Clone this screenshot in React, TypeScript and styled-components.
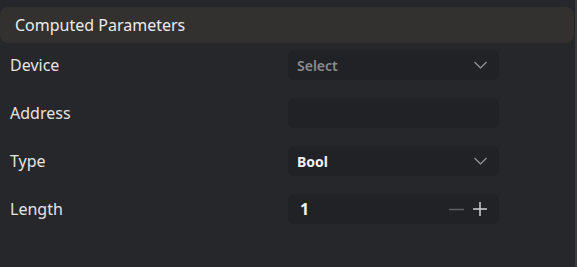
import styled, { createGlobalStyle } from "styled-components";

const GlobalStyle = createGlobalStyle`
  html, body {
    margin: 0;
    padding: 0;
    background: #26272b;
  }
  body {
    font-family: "Noto Sans", "Open Sans", sans-serif;
    color: #e6e6e6;
  }
`;

const Panel = styled.div`
  width: 577px;
  height: 267px;
  box-sizing: border-box;
  padding-top: 7px;
  border-right: 2px solid #3a3b3f;
  display: flex;
  flex-direction: column;
`;

const Header = styled.div`
  height: 36px;
  margin-right: 1px;
  display: flex;
  align-items: center;
  padding-left: 15px;
  background: #32312f;
  border-radius: 8px;
  font-size: 16px;
  color: #ececec;
`;

const Rows = styled.div`
  display: flex;
  flex-direction: column;
  gap: 18px;
  padding-top: 7px;
`;

const Row = styled.div`
  display: grid;
  grid-template-columns: 288px 211px;
  align-items: center;
  height: 30px;
`;

const Label = styled.div`
  padding-left: 10px;
  font-size: 16px;
  color: #e4e4e4;
`;

const Field = styled.div`
  height: 30px;
  box-sizing: border-box;
  background: #212226;
  border-radius: 6px;
  display: flex;
  align-items: center;
  padding: 0 12px 0 9px;
`;

const Value = styled.span<{ $muted?: boolean; $big?: boolean }>`
  flex: 1;
  font-size: ${(p) => (p.$big ? "16px" : "14px")};
  padding-left: ${(p) => (p.$big ? "3px" : "0")};
  font-weight: ${(p) => (p.$muted ? 600 : 700)};
  color: ${(p) => (p.$muted ? "#8b8b90" : "#f2f2f2")};
`;

const Icon = styled.svg`
  display: block;
  flex: none;
`;

function Chevron() {
  return (
    <Icon width="13" height="8" viewBox="0 0 13 8">
      <path d="M0.5 1l6 6 6-6" fill="none" stroke="#9a9a9e" strokeWidth="1.2" />
    </Icon>
  );
}

const Stepper = styled.div`
  display: flex;
  align-items: center;
  gap: 9px;
`;

function Select({ value, muted }: { value: string; muted?: boolean }) {
  return (
    <Field>
      <Value $muted={muted}>{value}</Value>
      <Chevron />
    </Field>
  );
}

export default function App() {
  return (
    <>
      <GlobalStyle />
      <Panel>
        <Header>Computed Parameters</Header>
        <Rows>
          <Row>
            <Label>Device</Label>
            <Select value="Select" muted />
          </Row>
          <Row>
            <Label>Address</Label>
            <Field />
          </Row>
          <Row>
            <Label>Type</Label>
            <Select value="Bool" />
          </Row>
          <Row>
            <Label>Length</Label>
            <Field>
              <Value $big>1</Value>
              <Stepper>
                <Icon width="15" height="15" viewBox="0 0 15 15">
                  <path d="M0 7.5h15" stroke="#5c5d61" strokeWidth="1.5" />
                </Icon>
                <Icon width="14" height="14" viewBox="0 0 14 14">
                  <path d="M0 7h14M7 0v14" stroke="#d0d0d2" strokeWidth="1.5" />
                </Icon>
              </Stepper>
            </Field>
          </Row>
        </Rows>
      </Panel>
    </>
  );
}
